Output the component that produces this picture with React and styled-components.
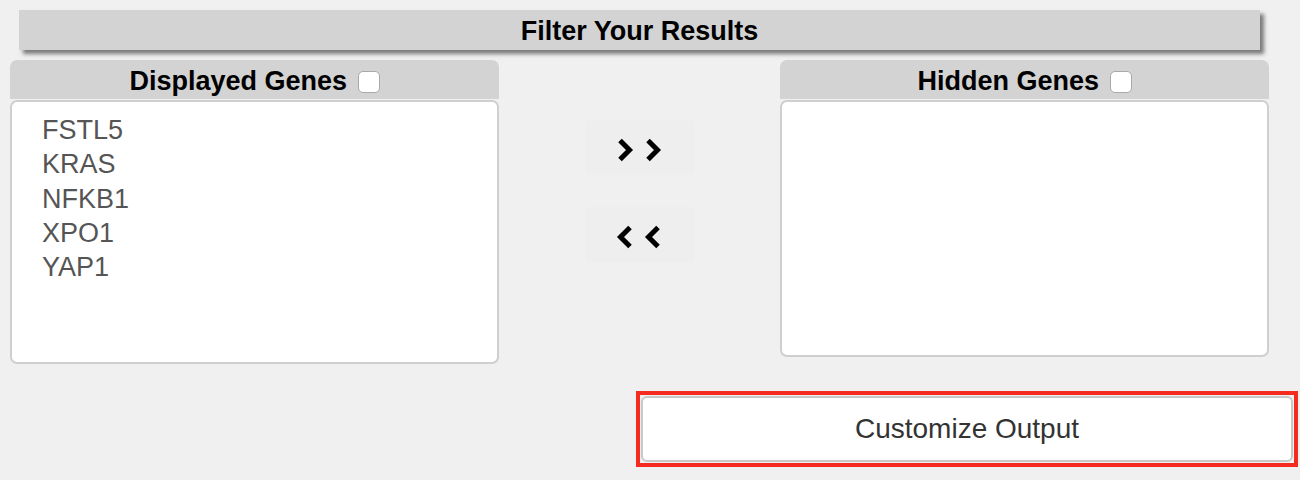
import styled, { createGlobalStyle } from "styled-components";

const GlobalStyle = createGlobalStyle`
  body {
    margin: 0;
    background: #f0f0f0;
    font-family: "Liberation Sans", Arial, sans-serif;
  }
`

const displayed = ['FSTL5', 'KRAS', 'NFKB1', 'XPO1', 'YAP1']

const Chevron = ({ left }) => (
    <svg width="18" height="26" viewBox="0 0 18 26">
        <polyline
            points={left ? "14,3.5 4.5,13 14,22.5" : "4,3.5 13.5,13 4,22.5"}
            fill="none"
            stroke="#000"
            strokeWidth="5"
            strokeLinejoin="miter"
        />
    </svg>
)

const App = () => {
    return (
        <Page>
            <GlobalStyle />
            <TitleBar>Filter Your Results</TitleBar>
            <Row>
                <Column>
                    <Header>
                        Displayed Genes <Check />
                    </Header>
                    <ListBox height={264}>
                        {displayed.map((g) => (
                            <Gene key={g}>{g}</Gene>
                        ))}
                    </ListBox>
                </Column>
                <Middle>
                    <ArrowButton>
                        <Chevron />
                        <Chevron />
                    </ArrowButton>
                    <ArrowButton>
                        <Chevron left />
                        <Chevron left />
                    </ArrowButton>
                </Middle>
                <Column>
                    <Header>
                        Hidden Genes <Check />
                    </Header>
                    <ListBox height={257} />
                </Column>
            </Row>
            <Highlight>
                <CustomizeButton>Customize Output</CustomizeButton>
            </Highlight>
        </Page>
    )
}

export default App

const Page = styled.div`
  width: 1300px;
  height: 480px;
  box-sizing: border-box;
  padding: 10px 0 0 10px;
  overflow: hidden;
`
const TitleBar = styled.div`
  margin-left: 9px;
  width: 1241px;
  height: 40px;
  box-sizing: border-box;
  padding-top: 3px;
  background: #d3d3d3;
  box-shadow: 4px 4px 4px #7a7a7a;
  display: flex;
  align-items: center;
  justify-content: center;
  font-size: 27px;
  font-weight: bold;
  color: #000;
`
const Row = styled.div`
  display: grid;
  grid-template-columns: 489px 281px 489px;
  margin-top: 10px;
`
const Column = styled.div`
  display: flex;
  flex-direction: column;
`
const Header = styled.div`
  height: 39px;
  box-sizing: border-box;
  padding-top: 3px;
  margin-bottom: 1px;
  background: #d3d3d3;
  border-radius: 7px 7px 0 0;
  display: flex;
  align-items: center;
  justify-content: center;
  font-size: 27px;
  font-weight: bold;
  color: #000;
  white-space: pre;
`
const Check = styled.span`
  display: inline-block;
  width: 22px;
  height: 22px;
  margin-left: 3px;
  margin-top: 1px;
  box-sizing: border-box;
  border: 1px solid #a9a9a9;
  border-radius: 5px;
  background: #fff;
`
const ListBox = styled.div`
  height: ${(p) => p.height}px;
  box-sizing: border-box;
  background: #fff;
  border: 2px solid #cfcfcf;
  border-radius: 7px;
  padding: 11px 0 0 30px;
`
const Gene = styled.div`
  font-size: 27px;
  line-height: 34.3px;
  color: #555;
`
const Middle = styled.div`
  display: flex;
  flex-direction: column;
  align-items: center;
  padding-top: 60px;
  gap: 32px;
`
const ArrowButton = styled.div`
  width: 108px;
  height: 55px;
  box-sizing: border-box;
  padding: 5px 2px 0 0;
  background: #eeeeee;
  border-radius: 4px;
  display: flex;
  align-items: center;
  justify-content: center;
  gap: 10px;
`
const Highlight = styled.div`
  margin: 27px 0 0 626px;
  width: 662px;
  height: 76px;
  box-sizing: border-box;
  border: 4px solid #f52b1f;
  padding: 1px;
`
const CustomizeButton = styled.div`
  height: 100%;
  box-sizing: border-box;
  background: #fff;
  border: 2px solid #c8c8c8;
  border-radius: 6px;
  display: flex;
  align-items: center;
  justify-content: center;
  font-size: 28px;
  color: #333;
`
